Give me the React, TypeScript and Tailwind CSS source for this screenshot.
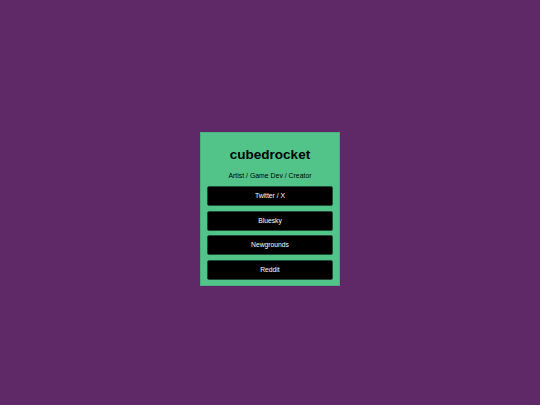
import React from "react";

const links = ["Twitter / X", "Bluesky", "Newgrounds", "Reddit"];

export default function App() {
  return (
    <div
      className="min-h-[405px] w-full bg-[#5f2866] flex items-center justify-center pt-[13px]"
      style={{ fontFamily: '"Liberation Sans", Arial, sans-serif' }}
    >
      <div className="w-[140px] h-[154px] bg-[#52c48a] border border-[#4bb07f] px-[6px] pt-[14px] pb-[5.5px] flex flex-col items-center">
        <h1 className="text-[13.5px] leading-[15.5px] font-bold text-black mb-[9.5px]">
          cubedrocket
        </h1>
        <p className="text-[6.9px] leading-[7.8px] text-black mb-[6.5px]">
          Artist / Game Dev / Creator
        </p>
        <div className="flex flex-col gap-[4.5px] w-full">
          {links.map((l) => (
            <div
              key={l}
              className="h-[20px] w-full bg-black rounded-[2px] border border-[#1f4a35] flex items-center justify-center text-white text-[6.75px]"
            >
              {l}
            </div>
          ))}
        </div>
      </div>
    </div>
  );
}
